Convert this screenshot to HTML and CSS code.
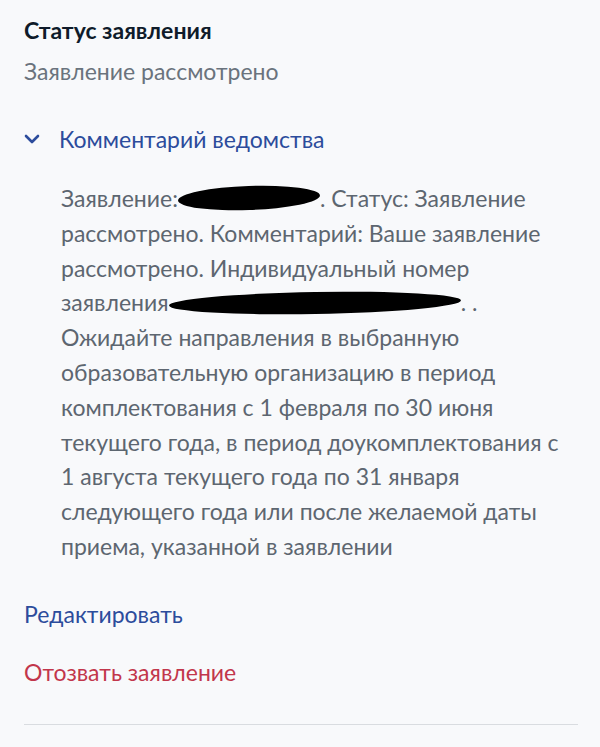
FILE: index.html
```html
<!DOCTYPE html>
<html lang="ru">
<head>
<meta charset="utf-8">
<link rel="stylesheet" href="styles.css">
</head>
<body>
<div class="page">
  <section class="status">
    <h2 class="status-title">Статус заявления</h2>
    <p class="status-value">Заявление рассмотрено</p>
  </section>
  <section class="comment">
    <div class="comment-head">
      <svg class="chevron" width="16" height="10" viewBox="0 0 16 10"><path d="M2 2 L8 8 L14 2" fill="none" stroke="#2c4c9c" stroke-width="2.6" stroke-linecap="round" stroke-linejoin="round"/></svg>
      <span class="comment-title">Комментарий ведомства</span>
    </div>
    <p class="comment-body">Заявление:<span class="redact r1"></span>. Статус: Заявление рассмотрено. Комментарий: Ваше заявление рассмотрено. Индивидуальный номер заявления<span class="redact r2"></span>. . Ожидайте направления в выбранную образовательную организацию в период комплектования с 1 февраля по 30 июня текущего года, в период доукомплектования с 1 августа текущего года по 31 января следующего года или после желаемой даты приема, указанной в заявлении</p>
  </section>
  <div class="actions">
    <a class="action edit">Редактировать</a>
    <a class="action revoke">Отозвать заявление</a>
  </div>
  <hr class="divider">
</div>
</body>
</html>
```
FILE: styles.css
```css
html, body {
  margin: 0;
  padding: 0;
  background: #f8f9fb;
}
body {
  font-family: Lato, "Noto Sans", sans-serif;
}
.page {
  padding: 14px 22px 0 24px;
}
.status-title {
  margin: 0;
  font-size: 23px;
  font-weight: 700;
  color: #0f1b2a;
  line-height: 32px;
}
.status-value {
  margin: 9px 0 0;
  font-size: 23px;
  color: #6a737d;
  line-height: 32px;
}
.comment {
  margin-top: 36px;
}
.comment-head {
  display: flex;
  align-items: center;
  gap: 19px;
}
.chevron {
  display: block;
}
.comment-title {
  font-size: 23px;
  color: #2c4c9c;
  line-height: 32px;
}
.comment-body {
  margin: 26px 0 0 37px;
  width: 512px;
  font-size: 23px;
  line-height: 34.8px;
  color: #5d6670;
}
.redact {
  display: inline-block;
  background: #000;
  border-radius: 50%;
  vertical-align: middle;
  height: 24px;
  margin-top: -6px;
}
.r1 {
  width: 142px;
  transform: rotate(-2deg);
}
.r2 {
  width: 292px;
  height: 22px;
  transform: rotate(-1deg);
}
.actions {
  display: flex;
  flex-direction: column;
  gap: 26px;
  margin-top: 34px;
}
.action {
  font-size: 23px;
  line-height: 32px;
}
.edit {
  color: #2c4c9c;
}
.revoke {
  color: #c2364b;
}
.divider {
  margin: 36px 0 0;
  border: none;
  border-top: 1.5px solid #d9dce0;
}
```
